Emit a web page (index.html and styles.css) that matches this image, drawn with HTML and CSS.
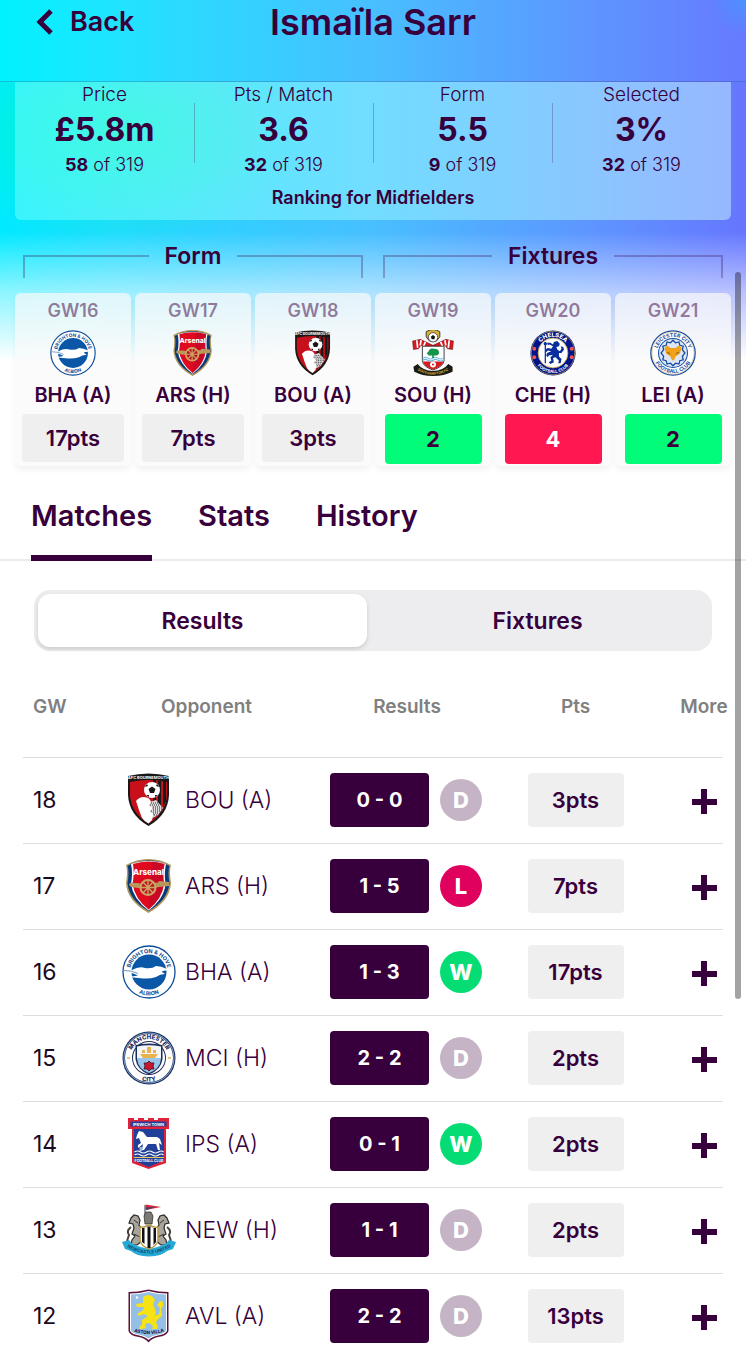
FILE: index.html
```html
<!DOCTYPE html>
<html lang="en">
<head>
    <meta charset="UTF-8">
    <meta name="viewport" content="width=device-width, initial-scale=1.0">
    <title>Ismaïla Sarr</title>
    <link rel="stylesheet" href="styles.css">
</head>
<body>

    <!-- Club crests, used by id below -->
    <svg class="crest-defs" aria-hidden="true">
        <defs>
            <path id="arcTop" d="M8 27A19 19 0 0 1 46 27"/>
            <path id="arcBottom" d="M3.500 27A23.500 23.500 0 0 0 50.500 27"/>
        </defs>

        <symbol id="bou" viewBox="0 0 54 54">
            <path d="M6 3Q26.500-2 47 3V22Q46 42 26.500 53Q7 42 6 22Z" fill="#1a1718"/>
            <path d="M8 9Q26.500 5 45 9V22Q44 40 26.500 50.500Q9 40 8 22Z" fill="#c8101a"/>
            <path d="M31 7h3v36l-3 3zM36 8h3v31l-3 3zM41 8h3v20l-3 6z" fill="#1a1718"/>
            <path d="M14 28Q19 22 26 25Q30 28 29 32L32 39L30 47L26.500 50.500Q22 48 20 45L17 37Z" fill="#fff"/>
            <path d="M28 29L34 27L41 35L36 42L29 46L32 41L27 39L31 35L27 33Z" fill="#ddd"/>
            <path d="M29 30h7M28 32h10M31 34h9M31 36h9M29 38h10M31 40h6M32 42h3" stroke="#222" stroke-width="1" stroke-dasharray="1 1"/>
            <circle cx="30" cy="17" r="8" fill="#fff"/>
            <path d="M30 13.500l3.500 2.500-1.500 4h-4l-1.500-4zM22.500 14l2.500-3 1 2zM37.500 14l-2.500-3-1 2zM24 22l3 0 0 2zM36 22l-3 0 0 2z" fill="#1a1718"/>
            <text x="26.500" y="6" font-size="4" font-weight="700" fill="#fff" text-anchor="middle">AFC BOURNEMOUTH</text>
        </symbol>

        <symbol id="ars" viewBox="0 0 54 54">
            <path d="M4 6Q14 0 26.500 0Q39 0 49 6Q47 12 49 24Q48 42 26.500 54Q5 42 4 24Q6 12 4 6Z" fill="#b0985c"/>
            <path d="M5.500 7Q15 1.500 26.500 1.500Q38 1.500 47.500 7Q45.500 13 47.500 24Q46 41 26.500 52Q7 41 5.500 24Q7.500 13 5.500 7Z" fill="#0b3a78"/>
            <path d="M9 5Q17 2 26.500 2Q36 2 44 5Q42 14 43.500 25Q42 40 26.500 51.500Q11 40 9 25Q11 14 9 5Z" fill="#fff"/>
            <path d="M11 5Q18 2.500 26.500 2.500Q35 2.500 42.500 5Q40.500 14 42 25Q40 40 26.500 50.500Q13 40 10.500 25Q12.500 14 11 5Z" fill="#e00a20"/>
            <path d="M30 2.500Q37 3 42.500 5Q40.500 14 42 25Q40 40 26.500 50.500Z" fill="#b8082c" opacity=".55"/>
            <path d="M8 24h8l3 1 17-1.500 1-1.500 10 1v4l-10 1-9 2-12-1-7-1-2-2z" fill="#b9975b"/>
            <circle cx="26" cy="28.500" r="7.500" fill="#c01424" stroke="#c9a763" stroke-width="2"/>
            <path d="M26 21v15M18.500 28.500h15M21 23l10 11M31 23L21 34" stroke="#c9a763" stroke-width="1.300"/>
            <text x="26.500" y="15.500" font-size="8" font-weight="800" fill="#fff" text-anchor="middle">Arsenal</text>
        </symbol>

        <symbol id="bha" viewBox="0 0 54 54">
            <circle cx="27" cy="27" r="26" fill="#fff" stroke="#0d4c97" stroke-width="1.300"/>
            <circle cx="27" cy="27" r="17.500" fill="#0a57a8"/>
            <path d="M1 25L10 25Q17 21 23 23Q30 24 34 21Q39 21 45 24L52 25L44 25.500Q39 26 40 27L43 29Q38 29 34 32Q28 34 21 33.500L7 32L16 30.500Q11 28 1 25Z" fill="#fff"/>
            <path d="M2 25.500q8 0 14 3" stroke="#0d4c97" stroke-width=".6" fill="none"/>
            <text font-size="5.500" font-weight="700" fill="#0d4c97"><textPath href="#arcTop" startOffset="50%" text-anchor="middle">BRIGHTON &amp; HOVE</textPath></text>
            <text font-size="5.500" font-weight="700" fill="#0d4c97"><textPath href="#arcBottom" startOffset="50%" text-anchor="middle">ALBION</textPath></text>
        </symbol>

        <symbol id="mci" viewBox="0 0 54 54">
            <circle cx="27" cy="27" r="26.500" fill="#1c2c5b"/>
            <circle cx="27" cy="27" r="25" fill="none" stroke="#98c5e9" stroke-width=".8"/>
            <circle cx="27" cy="27" r="24" fill="#fff"/>
            <circle cx="27" cy="27" r="17" fill="#1c2c5b"/>
            <circle cx="27" cy="27" r="16" fill="#fff"/>
            <path d="M13.500 14Q27 11 40.500 14V28Q39 39 27 43.500Q15 39 13.500 28Z" fill="#1c2c5b"/>
            <path d="M15 15.500Q27 13 39 15.500V27H15Z" fill="#f2f6fa"/>
            <path d="M15 27h24v1Q38 38 27 42Q16 38 15 28Z" fill="#98c5e9"/>
            <path d="M18 23h18l-3 4H21zM20 19h3v3h-3zM25 16h4v6h-4zM31 19h3v3h-3z" fill="#e8b34c"/>
            <path d="M27 30l2 2h3l-1 3 1 3-3 0-2 2-2-2-3 0 1-3-1-3h3z" fill="#c81530" stroke="#3c1020" stroke-width=".8"/>
            <path d="M5 27h3M46 27h3" stroke="#e8b34c" stroke-width="1.500"/>
            <text font-size="6" font-weight="800" fill="#1c2c5b"><textPath href="#arcTop" startOffset="50%" text-anchor="middle">MANCHESTER</textPath></text>
            <text font-size="6" font-weight="800" fill="#1c2c5b"><textPath href="#arcBottom" startOffset="50%" text-anchor="middle">CITY</textPath></text>
        </symbol>

        <symbol id="ips" viewBox="0 0 54 54">
            <path d="M6 1h6v2h4V1h6v2h4V1h6v2h4V1h11v11h-3v34L26.500 52L10 46V12H6Z" fill="#e0213a"/>
            <path d="M8.500 4.500h36v5h-36zM12 12h30v31.500L26.500 50L12 43.500Z" fill="#21409a"/>
            <path d="M15 18l2-4 4 1 4 5h10l3 2 2 6-3-2 1 7h-2l-2-6-8 0-4 6h-2l1-6-5 4v-3l3-2-2-5-3 1Z" fill="#fff"/>
            <path d="M19 34v-4" stroke="#9db4e0" stroke-width="3"/>
            <path d="M12.500 35q3-2 6 0t6 0 6 0 6 0 5 0M12.500 38q3-2 6 0t6 0 6 0 6 0 5 0" stroke="#fff" stroke-width="1.200" fill="none"/>
            <path d="M12 40.500h30" stroke="#e8c65a" stroke-width="1"/>
            <text x="26.500" y="8.800" font-size="4" font-weight="700" fill="#fff" text-anchor="middle">IPSWICH TOWN</text>
            <text x="27" y="44.500" font-size="3.500" font-weight="700" fill="#fff" text-anchor="middle">FOOTBALL CLUB</text>
        </symbol>

        <symbol id="new" viewBox="0 0 54 54">
            <path d="M23 2v12" stroke="#333" stroke-width="1"/>
            <path d="M23.500 1.500L39 4l-15 3z" fill="#d42a3c"/>
            <path d="M23.500 4.500L33 4l-9 3z" fill="#3a3f6c"/>
            <path d="M22 13l2-4 5 0 2 4-1 8h-7z" fill="#7d7a74" stroke="#222" stroke-width=".7"/>
            <path d="M9 15l3-3 4 1 2 4-1 5 3 4-1 3 1 9-5 4-6 0 1-5 3-4-3-2 2-6-1-4-4-1z" fill="#a9a59c" stroke="#2a2827" stroke-width="1.200"/>
            <path d="M45 15l-3-3-4 1-2 4 1 5-3 4 1 3-1 9 5 4 6 0-1-5-3-4 3-2-2-6 1-4 4-1z" fill="#a9a59c" stroke="#2a2827" stroke-width="1.200"/>
            <path d="M9 24q-5 4-2 8l-2 6M45 24q5 4 2 8l2 6" stroke="#4b433a" stroke-width="2" fill="none"/>
            <path d="M12 17l4 3M12 31l6 3M42 17l-4 3M42 31l-6 3" stroke="#333" stroke-width="1"/>
            <path d="M0 39l7-2q3 6 20 9q17-3 20-9l7 2-3 7-6 2q-5 5-18 5.500Q14 53 9 48l-6-2z" fill="#27a9d6"/>
            <path d="M18 24q4 1 9-2q5 3 9 2v13q-1 6-9 9q-8-3-9-9z" fill="#fff" stroke="#b99a4c" stroke-width="1.500"/>
            <path d="M20 25h2.500v16L20 39zM25.500 23.500h3V45h-3zM31.500 25H34v14l-2.500 3z" fill="#111"/>
            <path id="newRibbon" d="M5 44Q27 57 49 44" fill="none"/>
            <text font-size="4.500" font-weight="700" fill="#134a6c"><textPath href="#newRibbon" startOffset="50%" text-anchor="middle">NEWCASTLE UNITED</textPath></text>
        </symbol>

        <symbol id="avl" viewBox="0 0 54 54">
            <path d="M6.500 3Q16 3 26.500 .500Q37 3 46.500 3V42Q45 47 36 48Q30 49 26.500 53.500Q23 49 17 48Q8 47 6.500 42Z" fill="#5c1238"/>
            <path d="M8 4.500Q17 4.500 26.500 2Q36 4.500 45 4.500V42Q43 45.500 36 46.500Q30 47.500 26.500 51Q23 47.500 17 46.500Q10 45.500 8 42Z" fill="#fff"/>
            <path d="M9 5.500Q17 5.500 26.500 3Q36 5.500 44 5.500V41.500Q42 44.500 36 45.500Q30 46.500 26.500 49.500Q23 46.500 17 45.500Q11 44.500 9 41.500Z" fill="#95bfe5"/>
            <path d="M21 8l4-2 5 1 3 4-2 4 3 8-1 4 4-2 1-6-3-3 3-4 3 1v4l-2 3 1 7-5 4-1 3 2 3-1 3h-5l1-3-4-3-4 1 1 4-5 1-2 0 1-3 2-1 0-5 6-4-4-2-5 2-2-2 6-4 1-3-7 0-1-3 7-1z" fill="#f7e214"/>
            <circle cx="15" cy="8.500" r="1.200" fill="#fff"/>
            <path id="avlArc" d="M10 42Q27 48 44 42" fill="none"/>
            <text font-size="4.500" font-weight="800" fill="#21204c"><textPath href="#avlArc" startOffset="50%" text-anchor="middle">ASTON VILLA</textPath></text>
        </symbol>

        <symbol id="sou" viewBox="0 0 54 54">
            <path d="M19 8V2q8-5 16 0v6l-4 5h-8z" fill="#d9b23a" stroke="#222" stroke-width="1"/>
            <circle cx="27" cy="8.500" r="5.500" fill="#fff" stroke="#222" stroke-width=".8"/>
            <path d="M27 6l2.500 2-1 3h-3l-1-3z" fill="#111"/>
            <path d="M3 13l9-2 15 7 15-7 9 2-1 10-6-1-3-4-14 5-14-5-3 4-6 1z" fill="#d71920" stroke="#5a1015" stroke-width=".6"/>
            <path d="M8 12l1 9M13 12l-1 6M18 14l-2 5M46 12l-1 9M41 12l1 6M36 14l2 5" stroke="#fff" stroke-width="2"/>
            <path d="M14.500 19h25.500v17q-1 7-13 11q-12-4-12.500-11z" fill="#fff" stroke="#222" stroke-width="1"/>
            <path d="M15 37h24.500q-2 6-12.500 9.500q-10-3-12-9.500z" fill="#d71920"/>
            <path d="M15 33q3-2 6 0t6 0 6 0 6 0M15 35.500q3-2 6 0t6 0 6 0 6 0" stroke="#6db8e0" stroke-width="1.200" fill="none"/>
            <path d="M26 33v-3h-4q-4-3 0-5 1-4 6-3 6 0 6 4 1 4-6 4v3z" fill="#159548"/>
            <circle cx="27" cy="40.500" r="3.500" fill="#fff"/>
            <circle cx="27" cy="40.500" r="1.200" fill="#d71920"/>
            <path d="M4 43l5-3q6 8 18 8t18-8l5 3 0 6q-10 5-23 5T5 49z" fill="#1c1a14"/>
            <path id="souArc" d="M7 46Q27 59 47 46" fill="none"/>
            <text font-size="4" font-weight="700" fill="#d9b23a"><textPath href="#souArc" startOffset="50%" text-anchor="middle">SOUTHAMPTON FC</textPath></text>
        </symbol>

        <symbol id="che" viewBox="0 0 54 54">
            <circle cx="27" cy="27" r="26.500" fill="#001489"/>
            <circle cx="27" cy="27" r="25.500" fill="none" stroke="#c7a24a" stroke-width=".8"/>
            <circle cx="27" cy="27" r="17.500" fill="#fff" stroke="#c7a24a" stroke-width="1"/>
            <path d="M28 14l4-1 3 3-1 3-3 1 1 3 3 2 2-3-1-3 3 1 1 3-3 4-3 0 0 4 3 3-1 5h-3l1-3-4-4-3 1 1 5-4 2-2-2 3-2-1-4 3-3-5 1-1 2-2-2 1-3 5-2-4-1-2 2-1-3 3-2 4 1 2-3-4-2-2 1-1-3 4 0 3 2z" fill="#0a2f9c"/>
            <path d="M18 14v25" stroke="#0a2f9c" stroke-width="1.500"/>
            <circle cx="18" cy="16" r="2" fill="#0a2f9c"/>
            <circle cx="5" cy="22" r="2.300" fill="#e55"/><circle cx="5" cy="32" r="2.300" fill="#e55"/>
            <circle cx="49" cy="22" r="2.300" fill="#e55"/><circle cx="49" cy="32" r="2.300" fill="#e55"/>
            <text font-size="7" font-weight="800" fill="#fff"><textPath href="#arcTop" startOffset="50%" text-anchor="middle">CHELSEA</textPath></text>
            <text font-size="5" font-weight="700" fill="#fff"><textPath href="#arcBottom" startOffset="50%" text-anchor="middle">FOOTBALL CLUB</textPath></text>
        </symbol>

        <symbol id="lei" viewBox="0 0 54 54">
            <circle cx="27" cy="27" r="26" fill="#fff" stroke="#164aa0" stroke-width="1.500"/>
            <circle cx="27" cy="27" r="24.600" fill="none" stroke="#c9b26a" stroke-width=".6"/>
            <circle cx="27" cy="27" r="17" fill="#dce6f5" stroke="#164aa0" stroke-width="1.200"/>
            <path d="M27 12l3 3 4-1 1 4 4 1-1 4 3 4-3 4 1 4-4 1-1 4-4-1-3 3-3-3-4 1-1-4-4-1 1-4-3-4 3-4-1-4 4-1 1-4 4 1z" fill="none" stroke="#164aa0" stroke-width="1.500"/>
            <path d="M17 21l3-3 4 3h6l4-3 3 3-2 7-5 3-1 3-2 2-2-2-1-3-5-3z" fill="#f0a21c"/>
            <path d="M20 26l4 2M34 26l-4 2" stroke="#7a4c10" stroke-width="1"/>
            <text font-size="6" font-weight="700" fill="#164aa0"><textPath href="#arcTop" startOffset="50%" text-anchor="middle">LEICESTER CITY</textPath></text>
            <text font-size="6" font-weight="700" fill="#164aa0"><textPath href="#arcBottom" startOffset="50%" text-anchor="middle">FOOTBALL CLUB</textPath></text>
        </symbol>
    </svg>

    <header class="topbar">
        <a class="back" href="#">
            <svg width="18" height="26" viewBox="0 0 18 26" aria-hidden="true">
                <path d="M15 2L4 13l11 11" fill="none" stroke="currentColor" stroke-width="5"/>
            </svg>
            Back
        </a>
        <h1>Ismaïla Sarr</h1>
    </header>

    <section class="hero">
        <div class="summary">
            <dl class="stats">
                <div class="stat">
                    <dt>Price</dt>
                    <dd class="value">£5.8m</dd>
                    <dd class="rank"><b>58</b> of 319</dd>
                </div>
                <div class="stat">
                    <dt>Pts / Match</dt>
                    <dd class="value">3.6</dd>
                    <dd class="rank"><b>32</b> of 319</dd>
                </div>
                <div class="stat">
                    <dt>Form</dt>
                    <dd class="value">5.5</dd>
                    <dd class="rank"><b>9</b> of 319</dd>
                </div>
                <div class="stat">
                    <dt>Selected</dt>
                    <dd class="value">3%</dd>
                    <dd class="rank"><b>32</b> of 319</dd>
                </div>
            </dl>
            <p class="ranking">Ranking for Midfielders</p>
        </div>

        <div class="groups">
            <h2 class="group">Form</h2>
            <h2 class="group">Fixtures</h2>
        </div>

        <div class="cards">
            <div class="card">
                <span class="gw">GW16</span>
                <svg class="crest-sm"><use href="#bha"/></svg>
                <span class="team">BHA (A)</span>
                <span class="box">17pts</span>
            </div>
            <div class="card">
                <span class="gw">GW17</span>
                <svg class="crest-sm"><use href="#ars"/></svg>
                <span class="team">ARS (H)</span>
                <span class="box">7pts</span>
            </div>
            <div class="card">
                <span class="gw">GW18</span>
                <svg class="crest-sm"><use href="#bou"/></svg>
                <span class="team">BOU (A)</span>
                <span class="box">3pts</span>
            </div>
            <div class="card">
                <span class="gw">GW19</span>
                <svg class="crest-sm"><use href="#sou"/></svg>
                <span class="team">SOU (H)</span>
                <span class="box fdr fdr-2">2</span>
            </div>
            <div class="card">
                <span class="gw">GW20</span>
                <svg class="crest-sm"><use href="#che"/></svg>
                <span class="team">CHE (H)</span>
                <span class="box fdr fdr-4">4</span>
            </div>
            <div class="card">
                <span class="gw">GW21</span>
                <svg class="crest-sm"><use href="#lei"/></svg>
                <span class="team">LEI (A)</span>
                <span class="box fdr fdr-2">2</span>
            </div>
        </div>
    </section>

    <nav class="tabs">
        <a class="active" href="#">Matches</a>
        <a href="#">Stats</a>
        <a href="#">History</a>
    </nav>

    <div class="switch">
        <button type="button" class="on">Results</button>
        <button type="button">Fixtures</button>
    </div>

    <table class="matches">
        <colgroup>
            <col class="col-gw">
            <col>
            <col class="col-result">
            <col class="col-pts">
            <col class="col-more">
        </colgroup>
        <thead>
            <tr>
                <th class="gw-cell">GW</th>
                <th>Opponent</th>
                <th>Results</th>
                <th class="pts-cell">Pts</th>
                <th><span class="more-label">More</span></th>
            </tr>
        </thead>
        <tbody>
            <tr>
                <td class="gw-cell">18</td>
                <td><div class="opponent"><svg class="crest"><use href="#bou"/></svg>BOU (A)</div></td>
                <td><div class="result"><span class="score">0 - 0</span><span class="outcome draw">D</span></div></td>
                <td class="pts-cell"><span class="pts">3pts</span></td>
                <td><button type="button" class="plus" aria-label="More about gameweek 18"></button></td>
            </tr>
            <tr>
                <td class="gw-cell">17</td>
                <td><div class="opponent"><svg class="crest"><use href="#ars"/></svg>ARS (H)</div></td>
                <td><div class="result"><span class="score">1 - 5</span><span class="outcome loss">L</span></div></td>
                <td class="pts-cell"><span class="pts">7pts</span></td>
                <td><button type="button" class="plus" aria-label="More about gameweek 17"></button></td>
            </tr>
            <tr>
                <td class="gw-cell">16</td>
                <td><div class="opponent"><svg class="crest"><use href="#bha"/></svg>BHA (A)</div></td>
                <td><div class="result"><span class="score">1 - 3</span><span class="outcome win">W</span></div></td>
                <td class="pts-cell"><span class="pts">17pts</span></td>
                <td><button type="button" class="plus" aria-label="More about gameweek 16"></button></td>
            </tr>
            <tr>
                <td class="gw-cell">15</td>
                <td><div class="opponent"><svg class="crest"><use href="#mci"/></svg>MCI (H)</div></td>
                <td><div class="result"><span class="score">2 - 2</span><span class="outcome draw">D</span></div></td>
                <td class="pts-cell"><span class="pts">2pts</span></td>
                <td><button type="button" class="plus" aria-label="More about gameweek 15"></button></td>
            </tr>
            <tr>
                <td class="gw-cell">14</td>
                <td><div class="opponent"><svg class="crest"><use href="#ips"/></svg>IPS (A)</div></td>
                <td><div class="result"><span class="score">0 - 1</span><span class="outcome win">W</span></div></td>
                <td class="pts-cell"><span class="pts">2pts</span></td>
                <td><button type="button" class="plus" aria-label="More about gameweek 14"></button></td>
            </tr>
            <tr>
                <td class="gw-cell">13</td>
                <td><div class="opponent"><svg class="crest"><use href="#new"/></svg>NEW (H)</div></td>
                <td><div class="result"><span class="score">1 - 1</span><span class="outcome draw">D</span></div></td>
                <td class="pts-cell"><span class="pts">2pts</span></td>
                <td><button type="button" class="plus" aria-label="More about gameweek 13"></button></td>
            </tr>
            <tr>
                <td class="gw-cell">12</td>
                <td><div class="opponent"><svg class="crest"><use href="#avl"/></svg>AVL (A)</div></td>
                <td><div class="result"><span class="score">2 - 2</span><span class="outcome draw">D</span></div></td>
                <td class="pts-cell"><span class="pts">13pts</span></td>
                <td><button type="button" class="plus" aria-label="More about gameweek 12"></button></td>
            </tr>
        </tbody>
    </table>

    <div class="scrollbar"></div>

</body>
</html>
```

FILE: styles.css
```css
* {
    box-sizing: border-box;
}

body {
    position: relative;
    margin: 0;
    background-color: #fff;
    color: #37003c;
    font-family: Inter, "Open Sans", sans-serif;
}

h1, h2, p, dl, dd {
    margin: 0;
}

a {
    color: inherit;
    text-decoration: none;
}

button {
    padding: 0;
    border: none;
    background: none;
    color: inherit;
    font-family: inherit;
    cursor: pointer;
}

.crest-defs {
    display: none;
}

/* Top bar */
.topbar {
    display: grid;
    grid-template-columns: 1fr auto 1fr;
    align-items: center;
    height: 82px;
    padding: 0 36px 38px;
    border-bottom: 1px solid rgba(55, 0, 60, 0.2);
    background:
        radial-gradient(circle 36px at 100% 0, rgba(70, 150, 255, 0.8), rgba(70, 150, 255, 0)),
        linear-gradient(to right, #00f2ff 0%, #20e4ff 15%, #48bfff 50%, #5e94ff 80%, #667aff 100%);
}

.back {
    display: flex;
    align-items: center;
    gap: 16px;
    font-size: 27px;
    line-height: 44px;
    font-weight: 600;
}

.topbar h1 {
    font-size: 36px;
    line-height: 44px;
    font-weight: 600;
}

/* Player summary */
.hero {
    padding: 0 15px;
    background:
        linear-gradient(to bottom, rgba(255, 255, 255, 0) 150px, rgba(255, 255, 255, 0.55) 210px, #fff 280px),
        radial-gradient(ellipse 190px 110px at 120px 50px, rgba(0, 255, 170, 0.65), rgba(0, 255, 170, 0)),
        linear-gradient(to right, #00eaff 0%, #20dcff 15%, #48bfff 50%, #5e94ff 80%, #6676ff 100%);
}

.summary {
    height: 138px;
    border-radius: 0 0 6px 6px;
    background: linear-gradient(to right, rgba(110, 255, 255, 0.5), rgba(200, 245, 255, 0.5));
}

.stats {
    display: grid;
    grid-template-columns: repeat(4, 1fr);
}

.stat {
    position: relative;
    padding-top: 1px;
    text-align: center;
}

.stat + .stat::before {
    content: "";
    position: absolute;
    left: 0;
    top: 21px;
    width: 1px;
    height: 60px;
    background-color: rgba(55, 0, 60, 0.25);
}

.stat dt {
    font-size: 19px;
    line-height: 24px;
    font-weight: 300;
}

.value {
    font-size: 32px;
    line-height: 46px;
    font-weight: 700;
}

.rank {
    font-size: 18px;
    line-height: 24px;
    font-weight: 300;
}

.rank b {
    font-weight: 700;
}

.ranking {
    margin-top: 9px;
    font-size: 18px;
    line-height: 24px;
    font-weight: 600;
    text-align: center;
}

.groups {
    display: grid;
    grid-template-columns: 1fr 1fr;
    gap: 20px;
    padding: 24px 8px 0;
}

.group {
    display: flex;
    gap: 16px;
    height: 49px;
    font-size: 23px;
    line-height: 24px;
    font-weight: 600;
}

.group::before, .group::after {
    content: "";
    flex: 1;
    height: 21px;
    margin-top: 11px;
    border-top: 2px solid rgba(55, 0, 60, 0.28);
}

.group::before {
    border-left: 2px solid rgba(55, 0, 60, 0.28);
}

.group::after {
    border-right: 2px solid rgba(55, 0, 60, 0.28);
}

.cards {
    display: grid;
    grid-template-columns: repeat(6, 1fr);
    gap: 4px;
}

.card {
    display: flex;
    flex-direction: column;
    align-items: center;
    height: 173px;
    padding: 6px 7px 0;
    border-radius: 6px;
    background-color: rgba(249, 249, 249, 0.7);
    box-shadow: 0 4px 6px rgba(0, 0, 0, 0.05);
}

.gw {
    font-size: 18px;
    line-height: 24px;
    font-weight: 600;
    color: rgba(55, 0, 60, 0.5);
}

.crest-sm {
    width: 46px;
    height: 46px;
    margin: 7px 0;
}

.team {
    font-size: 20px;
    line-height: 24px;
    font-weight: 600;
}

.box {
    width: 100%;
    margin-top: 7px;
    border-radius: 4px;
    background-color: #efefef;
    font-size: 22px;
    line-height: 48px;
    font-weight: 600;
    text-align: center;
}

.fdr {
    width: 97px;
    line-height: 50px;
    font-weight: 700;
}

.fdr-2 {
    background-color: #01fc7a;
}

.fdr-4 {
    background-color: #ff1751;
    color: #fff;
}

/* Tabs */
.tabs {
    display: flex;
    gap: 46px;
    margin-top: 20px;
    padding: 0 31px;
    box-shadow: inset 0 -2px #ebebeb;
    font-size: 29px;
    line-height: 60px;
    font-weight: 600;
}

.tabs a {
    height: 75px;
}

.tabs .active {
    border-bottom: 6px solid #37003c;
}

/* Results / fixtures switch */
.switch {
    display: grid;
    grid-template-columns: 329px 1fr;
    margin: 29px 34px 0;
    padding: 4px;
    border-radius: 16px;
    background-color: #ededef;
}

.switch button {
    height: 53px;
    border-radius: 12px;
    font-size: 23px;
    font-weight: 600;
}

.switch .on {
    background-color: #fff;
    box-shadow: 0 2px 4px rgba(0, 0, 0, 0.15);
}

/* Matches */
.matches {
    width: calc(100% - 46px);
    margin: 6px 23px 0;
    border-collapse: collapse;
    table-layout: fixed;
}

.col-gw {
    width: 84px;
}

.col-result {
    width: 202px;
}

.col-pts {
    width: 177px;
}

.col-more {
    width: 38px;
}

.matches th {
    height: 100px;
    padding: 0;
    color: #808080;
    font-size: 19px;
    font-weight: 600;
}

.matches td {
    height: 86px;
    padding: 0;
    border-top: 1px solid #dedede;
}

.matches .gw-cell {
    padding-left: 10px;
    text-align: left;
}

td.gw-cell, .opponent {
    font-size: 23px;
}

td.gw-cell {
    color: #1c0a20;
}

.more-label {
    display: flex;
    justify-content: center;
}

.opponent {
    display: flex;
    align-items: center;
    gap: 9px;
    padding-left: 15px;
    font-weight: 300;
}

.crest {
    width: 54px;
    height: 54px;
}

.result {
    display: flex;
    align-items: center;
    justify-content: center;
    gap: 11px;
    padding-right: 2px;
}

.score, .pts {
    border-radius: 4px;
    font-size: 22px;
    line-height: 54px;
    font-weight: 600;
    text-align: center;
}

.score {
    width: 99px;
    background-color: #37003c;
    color: #fff;
    font-size: 20px;
    font-weight: 700;
}

.outcome {
    width: 42px;
    border-radius: 50%;
    color: #fff;
    font-size: 22px;
    line-height: 42px;
    font-weight: 800;
    text-align: center;
}

.draw {
    background-color: #c4b4c6;
}

.loss {
    background-color: #e0005e;
}

.win {
    background-color: #05dc74;
}

.matches .pts-cell {
    padding-right: 42px;
    text-align: center;
}

.pts {
    display: inline-block;
    width: 96px;
    background-color: #efefef;
}

.plus {
    display: block;
    width: 25px;
    height: 25px;
    margin: 3px auto 0;
    background:
        linear-gradient(#37003c, #37003c) center / 25px 6px no-repeat,
        linear-gradient(#37003c, #37003c) center / 6px 25px no-repeat;
}

.scrollbar {
    position: absolute;
    top: 272px;
    right: 5px;
    width: 6px;
    height: 727px;
    border-radius: 3px;
    background-color: rgba(0, 0, 0, 0.36);
}
```
